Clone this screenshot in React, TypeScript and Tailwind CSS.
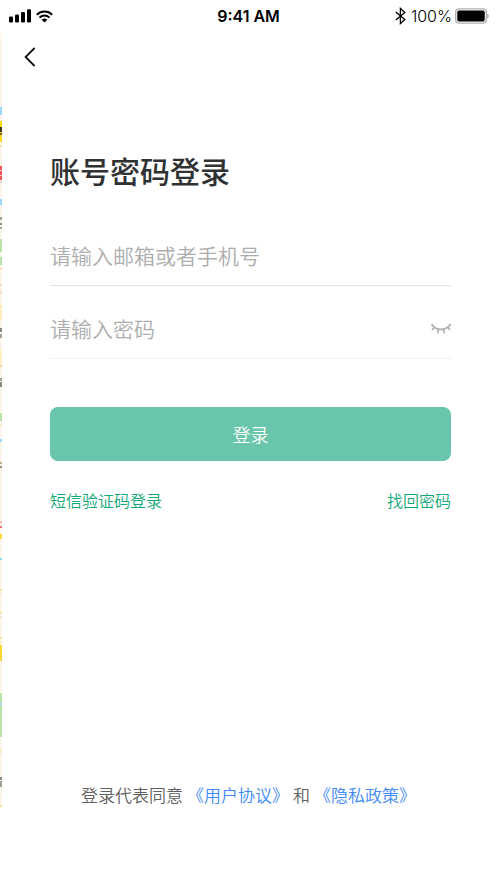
import React, { useState } from 'react';

interface MapMark {
  y: number;
  h: number;
  color: string;
}

// Sliver of the map screen that stays visible behind the login page
const mapMarks: MapMark[] = [
  { y: 74, h: 8, color: '#9bd8f5' },
  { y: 88, h: 21, color: '#fadb14' },
  { y: 94, h: 5, color: '#3f3a1c' },
  { y: 100, h: 2, color: '#6b6120' },
  { y: 112, h: 2, color: '#fbdcae' },
  { y: 133, h: 14, color: '#f2555a' },
  { y: 137, h: 1, color: '#fac5c5' },
  { y: 142, h: 1, color: '#fac5c5' },
  { y: 148, h: 2, color: '#dcd3cd' },
  { y: 166, h: 6, color: '#9bd8f5' },
  { y: 184, h: 3, color: '#a3a09c' },
  { y: 190, h: 2, color: '#8b8884' },
  { y: 194, h: 2, color: '#a3a09c' },
  { y: 206, h: 13, color: '#b9e4a8' },
  { y: 224, h: 8, color: '#b9e4a8' },
  { y: 235, h: 2, color: '#fde1a6' },
  { y: 251, h: 2, color: '#fbdcae' },
  { y: 258, h: 3, color: '#f8dfc4' },
  { y: 272, h: 13, color: '#fff0bd' },
  { y: 273, h: 1, color: '#fbdcae' },
  { y: 285, h: 1, color: '#fbd09c' },
  { y: 295, h: 4, color: '#8b8884' },
  { y: 301, h: 4, color: '#a3a09c' },
  { y: 317, h: 14, color: '#fff0bd' },
  { y: 332, h: 2, color: '#fbd09c' },
  { y: 345, h: 3, color: '#a3a09c' },
  { y: 349, h: 5, color: '#8b8884' },
  { y: 380, h: 8, color: '#b9e4a8' },
  { y: 391, h: 1, color: '#fde1a6' },
  { y: 406, h: 3, color: '#9bd8f5' },
  { y: 429, h: 2, color: '#c3aa88' },
  { y: 433, h: 2, color: '#a08d78' },
  { y: 488, h: 2, color: '#f5b5b5' },
  { y: 493, h: 2, color: '#ef6c70' },
  { y: 501, h: 5, color: '#fdd835' },
  { y: 525, h: 2, color: '#8fdcf0' },
  { y: 556, h: 2, color: '#fde1a6' },
  { y: 560, h: 1, color: '#fde1a6' },
  { y: 579, h: 2, color: '#fde1a6' },
  { y: 583, h: 1, color: '#fbdcae' },
  { y: 604, h: 2, color: '#fde1a6' },
  { y: 608, h: 2, color: '#fff0bd' },
  { y: 612, h: 16, color: '#fdd835' },
  { y: 660, h: 44, color: '#b9e4a8' },
  { y: 670, h: 2, color: '#9bd8f5' },
  { y: 717, h: 1, color: '#fbdc8c' },
  { y: 720, h: 1, color: '#fbdcae' },
  { y: 744, h: 3, color: '#8b8884' },
  { y: 748, h: 6, color: '#a3a09c' },
  { y: 772, h: 2, color: '#fde1a6' },
];

const MapSliver: React.FC = () => (
  <svg className="absolute top-[33px] left-0" width="2" height="775" aria-hidden="true">
    <rect width="2" height="775" fill="#fbf5ea" />
    {mapMarks.map((mark) => (
      <rect key={mark.y} y={mark.y} width="2" height={mark.h} fill={mark.color} />
    ))}
  </svg>
);

const StatusBar: React.FC = () => (
  <div className="grid h-8 grid-cols-3 items-center px-2 font-['Inter',sans-serif] text-base text-black">
    <div className="flex items-center gap-1">
      <svg width="24" height="14" viewBox="0 0 24 14" aria-hidden="true">
        <rect x="1" y="7.5" width="4" height="6" rx="1.2" />
        <rect x="7" y="5.5" width="4" height="8" rx="1.2" />
        <rect x="13" y="3" width="4" height="10.5" rx="1.2" />
        <rect x="19" y="0.3" width="4" height="13.2" rx="1.2" />
      </svg>
      <svg width="17" height="13" viewBox="0 0 17 13" fill="none" stroke="#000" strokeWidth="2" aria-hidden="true">
        <path d="M0.8 4.7a11 11 0 0 1 15.4 0" />
        <path d="M3.5 7.6a7.1 7.1 0 0 1 10 0" />
        <path d="M8.5 12.6 5.6 9.8a4.2 4.2 0 0 1 5.8 0z" fill="#000" stroke="none" />
      </svg>
    </div>
    <span className="text-center font-semibold">9:41 AM</span>
    <div className="flex items-center justify-end gap-[3px]">
      <svg width="13" height="18" viewBox="0 0 13 18" fill="none" stroke="#000" strokeWidth="1.3" aria-hidden="true">
        <path d="M0.8 5 9.8 12.6 5.4 16.6V1.4L9.8 5.4 0.8 13" />
      </svg>
      <span>100%</span>
      <svg width="34" height="16" viewBox="0 0 34 16" aria-hidden="true">
        <rect x="0.7" y="0.9" width="30.6" height="14.2" rx="3.4" fill="#fff" stroke="#b0b0b0" strokeWidth="1.4" />
        <rect x="2.3" y="2.6" width="27.4" height="10.8" rx="1.6" />
        <path d="M32.4 5.4c1.7 0.9 1.7 4.3 0 5.2z" fill="#9a9a9a" />
      </svg>
    </div>
  </div>
);

const EyeClosedIcon: React.FC = () => (
  <svg width="20" height="11" viewBox="0 0 20 11" fill="none" stroke="#b0b0b0" strokeWidth="1.7" aria-hidden="true">
    <path d="M0.6 1C5 8.2 15 8.2 19.4 1M3.6 3.8 1 7M7.6 6 6.6 10.4M12.4 6 13.4 10.4M16.4 3.8 19 7" />
  </svg>
);

const inputClass =
  "h-11 w-full min-w-0 bg-transparent text-[21px] text-[#303133] outline-none placeholder:text-[#adadad]";

export default function App() {
  const [account, setAccount] = useState('');
  const [password, setPassword] = useState('');
  const [visible, setVisible] = useState(false);

  return (
    <div className="relative flex min-h-screen flex-col bg-white font-['Noto_Sans_CJK_SC',sans-serif] font-[350]">
      <MapSliver />
      <StatusBar />

      <header className="flex h-[50px] items-center px-4">
        <button type="button" aria-label="返回" className="flex size-7 items-center justify-center">
          <svg width="12" height="20" viewBox="0 0 12 20" fill="none" stroke="#111" strokeWidth="1.8" aria-hidden="true">
            <path d="M10.6 1 1.6 10l9 9" />
          </svg>
        </button>
      </header>

      <main className="flex grow flex-col pr-[46px] pl-[50px]">
        <h1 className="mt-[66px] text-[30px] leading-[44px] font-medium text-[#303133]">账号密码登录</h1>

        <form onSubmit={(e) => e.preventDefault()}>
          <div className="mt-[41px] border-b border-[#e4e4e4] pb-2">
            <input
              type="text"
              aria-label="请输入邮箱或者手机号"
              placeholder="请输入邮箱或者手机号"
              value={account}
              onChange={(e) => setAccount(e.target.value)}
              className={inputClass}
            />
          </div>
          <div className="mt-5 flex items-center border-b border-[#f0f0f0] pb-2">
            <input
              type={visible ? 'text' : 'password'}
              aria-label="请输入密码"
              placeholder="请输入密码"
              value={password}
              onChange={(e) => setPassword(e.target.value)}
              className={inputClass}
            />
            <button type="button" aria-label="显示密码" onClick={() => setVisible(!visible)}>
              <EyeClosedIcon />
            </button>
          </div>
          <button type="submit" className="mt-12 h-[54px] w-full rounded-lg bg-[#69c6ac] text-lg text-white">
            登录
          </button>
        </form>

        <div className="mt-[27px] flex justify-between text-base text-[#12a777]">
          <a href="#sms">短信验证码登录</a>
          <a href="#reset">找回密码</a>
        </div>
      </main>

      <footer className="flex justify-center gap-1 pb-[74px] text-[17px] leading-7 text-[#606060]">
        <span>登录代表同意</span>
        <a href="#terms" className="text-[#4089f7]">《用户协议》</a>
        <span>和</span>
        <a href="#privacy" className="text-[#4089f7]">《隐私政策》</a>
      </footer>
    </div>
  );
}
